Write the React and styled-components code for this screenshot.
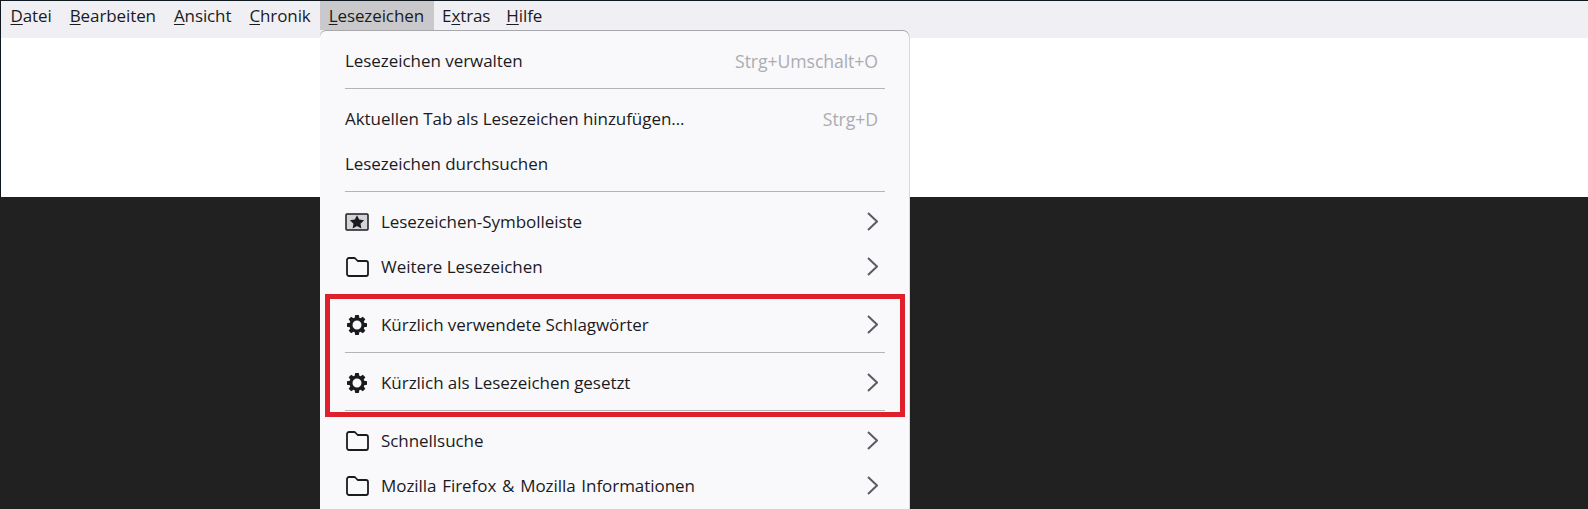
import React from "react";
import styled, { createGlobalStyle } from "styled-components";

const Global = createGlobalStyle`
  html, body { margin: 0; padding: 0; background: #202020; }
  body { font-family: "Open Sans", "Noto Sans", "Liberation Sans", sans-serif; overflow: hidden; }
`;
const Page = styled.div`
  position: relative; width: 1588px; height: 509px; overflow: hidden;
  display: flex; flex-direction: column; background: #202020;
  background-image: radial-gradient(#232323 0.6px, transparent 0.8px);
  background-size: 3px 3px;
`;
const MenuBar = styled.div`
  height: 38px; box-sizing: border-box; background: #f0f0f4; border-top: 1px solid #10181f;
  border-left: 1px solid #10181f; display: flex; align-items: flex-start;
  padding-left: 1px; flex: none;
`;
const TopItem = styled.div`
  height: 29px; padding: 0 9.5px 0 8.5px; display: flex; align-items: center; box-sizing: border-box;
  font-size: 17px; letter-spacing: -0.1px; color: #1b1b1f;
  margin-right: ${p => (p.$trim ? "-2px" : "0")};
  background: ${p => (p.$active ? "#c9c9cc" : "transparent")};
  u { text-underline-offset: 2px; text-decoration-thickness: 1px; }
`;
const Content = styled.div`
  height: 159px; flex: none; background: #fff; border-left: 1px solid #10181f;
`;
const Menu = styled.div`
  position: absolute; left: 320px; top: 31px; width: 589px; height: 490px;
  box-sizing: border-box; background: #f9f9fb; border-radius: 6px 6px 0 0;
  box-shadow: 0 -1px 0 #a8a8ac, 1px 0 0 #d8d8dc; padding-top: 7px;
`;
const Row = styled.div`
  height: 45px; display: flex; align-items: center; box-sizing: border-box;
  padding: 0 31px 0 25px; font-size: 17px; letter-spacing: -0.05px; color: #1b1b1f;
`;
const Label = styled.span`
  flex: 1; white-space: nowrap;
  word-spacing: ${p => (p.$wide ? "1.4px" : "0")};
`;
const Shortcut = styled.span` color: #acacb1; white-space: nowrap; font-size: 17.7px; letter-spacing: -0.1px; `;
const IconBox = styled.span`
  width: 24px; height: 24px; margin-right: 12px; display: flex; align-items: center; justify-content: center; flex: none;
`;
const Sep = styled.div`
  height: 1px; background: #b4b4b8; margin: 5px 24px 7px 25px;
`;
const Gap = styled.div` height: 13px; `;
const Annotation = styled.div`
  position: absolute; left: 325px; top: 294px; width: 580px; height: 123px; box-sizing: border-box;
  border: 5px solid #e01f2d; pointer-events: none;
`;

const Chevron = () => (
  <svg width="11" height="19" viewBox="0 0 11 19" fill="none">
    <path d="M1 1 L10 9.5 L1 18" stroke="#5b5b66" strokeWidth="2" />
  </svg>
);
const Folder = () => (
  <svg width="23" height="20" viewBox="0 0 23 20" fill="none">
    <path d="M1 3 a2 2 0 0 1 2-2 h5 a2 2 0 0 1 1.3 .5 l2.4 2.5 h8.3 a2 2 0 0 1 2 2 v11 a2 2 0 0 1-2 2 h-17 a2 2 0 0 1-2-2 z"
      stroke="#1b1b1f" strokeWidth="1.8" strokeLinejoin="round" />
  </svg>
);
const StarBar = () => (
  <svg width="24" height="18" viewBox="0 0 24 18">
    <rect x="1" y="1" width="22" height="16" rx="1" fill="#d4d4d8" stroke="#1b1b1f" strokeWidth="1.5" />
    <path d="M12 2.2 l2.2 4.4 4.9 .7 -3.6 3.4 .9 4.8 -4.4-2.4 -4.4 2.4 .9-4.8 -3.6-3.4 4.9-.7z" fill="#1b1b1f" />
  </svg>
);
const Gear = () => (
  <svg width="22" height="22" viewBox="0 0 22 22" fill="none">
    <circle cx="11" cy="11" r="6" stroke="#1b1b1f" strokeWidth="3" />
    {[0, 45, 90, 135, 180, 225, 270, 315].map(a => (
      <path key={a} d="M9.2 1 H12.8 L13.6 5 H8.4 Z" fill="#1b1b1f" transform={`rotate(${a} 11 11)`} />
    ))}
  </svg>
);

const top = [["D", "atei"], ["B", "earbeiten"], ["A", "nsicht"], ["C", "hronik"], ["L", "esezeichen", true]];

export default function App() {
  return (
    <Page>
      <Global />
      <MenuBar>
        {top.map(([k, r, a]) => (
          <TopItem key={k} $active={a}><span><u>{k}</u>{r}</span></TopItem>
        ))}
        <TopItem $trim><span>E<u>x</u>tras</span></TopItem>
        <TopItem><span><u>H</u>ilfe</span></TopItem>
      </MenuBar>
      <Content />
      <Menu>
        <Row><Label>Lesezeichen verwalten</Label><Shortcut>Strg+Umschalt+O</Shortcut></Row>
        <Sep />
        <Row><Label>Aktuellen Tab als Lesezeichen hinzufügen…</Label><Shortcut>Strg+D</Shortcut></Row>
        <Row><Label>Lesezeichen durchsuchen</Label></Row>
        <Sep />
        <Row><IconBox><StarBar /></IconBox><Label>Lesezeichen-Symbolleiste</Label><Chevron /></Row>
        <Row><IconBox><Folder /></IconBox><Label>Weitere Lesezeichen</Label><Chevron /></Row>
        <Gap />
        <Row><IconBox><Gear /></IconBox><Label>Kürzlich verwendete Schlagwörter</Label><Chevron /></Row>
        <Sep />
        <Row><IconBox><Gear /></IconBox><Label>Kürzlich als Lesezeichen gesetzt</Label><Chevron /></Row>
        <Sep />
        <Row><IconBox><Folder /></IconBox><Label>Schnellsuche</Label><Chevron /></Row>
        <Row><IconBox><Folder /></IconBox><Label $wide>Mozilla Firefox &amp; Mozilla Informationen</Label><Chevron /></Row>
      </Menu>
      <Annotation />
    </Page>
  );
}
